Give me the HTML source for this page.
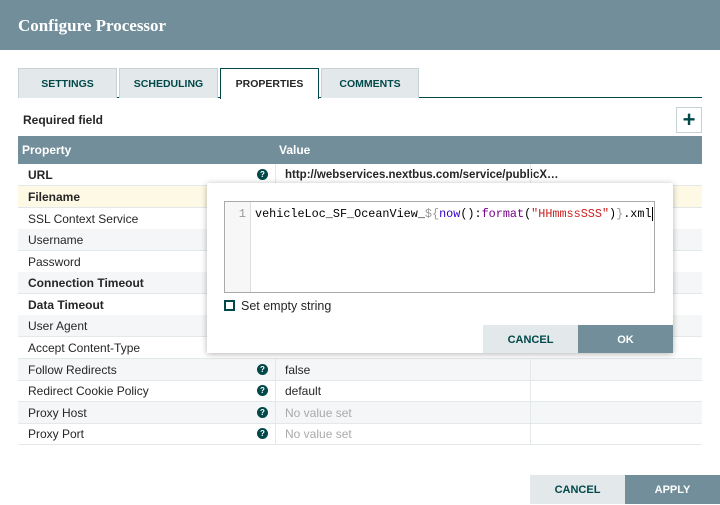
<!DOCTYPE html>
<html><head><style>
*{box-sizing:border-box;margin:0;padding:0}
body{width:720px;height:504px;position:relative;background:#fff;font-family:"Liberation Sans",sans-serif;overflow:hidden;color:#262626}
.abs{position:absolute}
.title{left:0;top:0;width:720px;height:50px;background:#728e9b;color:#fff;font:bold 17px "Liberation Serif",serif;padding:16px 0 0 18px}
.tab{top:68px;height:30px;background:#e3e8eb;border:1px solid #c7d2d7;border-bottom:none;font:bold 10.5px "Liberation Sans",sans-serif;color:#004849;text-align:center;line-height:30px}
.tab.act{background:#fff;border:1px solid #004849;border-bottom:none;color:#262626;height:31px}
.row{left:18px;width:684px;height:22px;border-bottom:1px solid #e3e8eb;font-size:12px;line-height:23px}
.row .p{position:absolute;left:10px}
.row .v{position:absolute;left:267px}
.row .c1{position:absolute;left:257px;top:0;height:21px;border-left:1px solid #e3e8eb}
.row .c2{position:absolute;left:512px;top:0;height:21px;border-left:1px solid #e3e8eb}
.q{position:absolute;left:239px;top:5px;width:11px;height:11px;border-radius:50%;background:#004849;color:#fff;font:bold 8px/11px "Liberation Sans",sans-serif;text-align:center}
.g{background:#f4f6f7}
.b{font-weight:bold}
.nv{color:#aaa}
.btn{font:bold 11px "Liberation Sans",sans-serif;text-align:center;line-height:30px}
</style></head><body>
<div class="abs title">Configure Processor</div>
<div class="abs" style="left:18px;top:97px;width:684px;height:1px;background:#004849"></div>
<div class="abs tab" style="left:18px;width:99px">SETTINGS</div>
<div class="abs tab" style="left:119px;width:99px">SCHEDULING</div>
<div class="abs tab act" style="left:220px;width:99px">PROPERTIES</div>
<div class="abs tab" style="left:321px;width:98px">COMMENTS</div>
<div class="abs" style="left:23px;top:113px;font-size:12px;font-weight:bold">Required field</div>
<div class="abs" style="left:676px;top:107px;width:26px;height:26px;border:1px solid #c7d2d7;background:#fff;color:#004849;font:bold 22px/23px 'Liberation Sans',sans-serif;text-align:center">+</div>
<div class="abs" style="left:18px;top:136px;width:684px;height:28px;background:#728e9b;color:#fff;font-weight:bold;font-size:12px;line-height:29px"><span style="position:absolute;left:4px">Property</span><span style="position:absolute;left:261px">Value</span></div>

<div class="abs row" style="top:164px"><span class="p b">URL</span><span class="q">?</span><span class="c1"></span><span class="v b" style="font-size:11.5px">http://webservices.nextbus.com/service/publicX…</span><span class="c2"></span></div>
<div class="abs row b" style="top:186px;background:#fdf9e5"><span class="p">Filename</span></div>
<div class="abs row" style="top:208px"><span class="p">SSL Context Service</span></div>
<div class="abs row g" style="top:229px"><span class="p">Username</span></div>
<div class="abs row" style="top:251px"><span class="p">Password</span></div>
<div class="abs row g b" style="top:272px"><span class="p">Connection Timeout</span></div>
<div class="abs row b" style="top:294px"><span class="p">Data Timeout</span></div>
<div class="abs row g" style="top:315px"><span class="p">User Agent</span></div>
<div class="abs row" style="top:337px"><span class="p">Accept Content-Type</span></div>
<div class="abs row g" style="top:359px"><span class="p">Follow Redirects</span><span class="q">?</span><span class="c1"></span><span class="v">false</span><span class="c2"></span></div>
<div class="abs row" style="top:380px"><span class="p">Redirect Cookie Policy</span><span class="q">?</span><span class="c1"></span><span class="v">default</span><span class="c2"></span></div>
<div class="abs row g" style="top:402px"><span class="p">Proxy Host</span><span class="q">?</span><span class="c1"></span><span class="v nv">No value set</span><span class="c2"></span></div>
<div class="abs row" style="top:423px"><span class="p">Proxy Port</span><span class="q">?</span><span class="c1"></span><span class="v nv">No value set</span><span class="c2"></span></div>

<div class="abs" style="left:207px;top:183px;width:466px;height:170px;background:#fff;box-shadow:0 1px 6px rgba(0,0,0,.3)"></div>
<div class="abs" style="left:224px;top:201px;width:431px;height:92px;border:1px solid #aaa;background:#fff">
 <div style="position:absolute;left:0;top:0;width:26px;height:90px;background:#f7f7f7;border-right:1px solid #ddd;font:12px 'Liberation Mono',monospace;color:#999;text-align:right;padding:5px 4px 0 0">1</div>
 <div style="position:absolute;left:30px;top:5px;font:11.8px 'Liberation Mono',monospace;color:#000;white-space:nowrap">vehicleLoc_SF_OceanView_<span style="color:#999">${</span><span style="color:#30c">now</span>():<span style="color:#708">format</span>(<span style="color:#c22">"HHmmssSSS"</span>)<span style="color:#999">}</span>.xml<span style="border-left:1px solid #000"></span></div>
</div>
<div class="abs" style="left:224px;top:300px;width:11px;height:11px;border:2px solid #004849"></div>
<div class="abs" style="left:241px;top:299px;font-size:12.5px">Set empty string</div>
<div class="abs btn" style="left:483px;top:325px;width:95px;height:28px;background:#e3e8eb;color:#004849">CANCEL</div>
<div class="abs btn" style="left:578px;top:325px;width:95px;height:28px;background:#728e9b;color:#fff">OK</div>

<div class="abs btn" style="left:530px;top:475px;width:95px;height:29px;background:#e3e8eb;color:#004849">CANCEL</div>
<div class="abs btn" style="left:625px;top:475px;width:95px;height:29px;background:#728e9b;color:#fff">APPLY</div>
</body></html>
